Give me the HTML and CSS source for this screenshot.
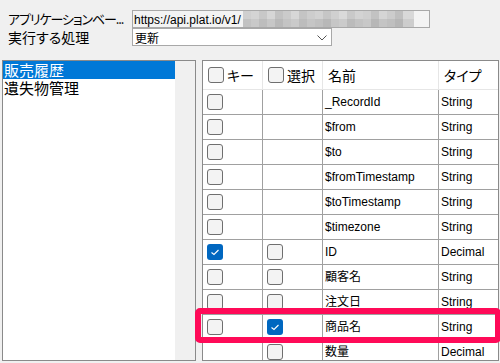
FILE: index.html
```html
<!DOCTYPE html>
<html lang="ja">
<head>
<meta charset="utf-8">
<link rel="stylesheet" href="styles.css">
</head>
<body>
<div class="form">
  <div class="label app">アプリケーションベー...</div>
  <div class="textbox"><span class="url">https://api.plat.io/v1/</span><span class="mosaic"></span></div>
  <div class="label">実行する処理</div>
  <div class="select"><span class="sel-text">更新</span><svg class="chev" width="10" height="6" viewBox="0 0 10 6"><polyline points="0.5,0.5 5,5 9.5,0.5" fill="none" stroke="#555" stroke-width="1"/></svg></div>
</div>
<div class="main">
  <div class="list">
    <div class="list-inner">
      <div class="item selected">販売履歴</div>
      <div class="item">遺失物管理</div>
    </div>
  </div>
  <div class="grid">
    <div class="table">
      <div class="hcell"><span class="cb"></span><span class="htext">キー</span></div>
      <div class="hcell"><span class="cb"></span><span class="htext">選択</span></div>
      <div class="hcell"><span class="htext">名前</span></div>
      <div class="hcell last"><span class="htext">タイプ</span></div>

      <div class="cell"><span class="cb"></span></div><div class="cell"></div><div class="cell txt">_RecordId</div><div class="cell txt last">String</div>
      <div class="cell"><span class="cb"></span></div><div class="cell"></div><div class="cell txt">$from</div><div class="cell txt last">String</div>
      <div class="cell"><span class="cb"></span></div><div class="cell"></div><div class="cell txt">$to</div><div class="cell txt last">String</div>
      <div class="cell"><span class="cb"></span></div><div class="cell"></div><div class="cell txt">$fromTimestamp</div><div class="cell txt last">String</div>
      <div class="cell"><span class="cb"></span></div><div class="cell"></div><div class="cell txt">$toTimestamp</div><div class="cell txt last">String</div>
      <div class="cell"><span class="cb"></span></div><div class="cell"></div><div class="cell txt">$timezone</div><div class="cell txt last">String</div>
      <div class="cell"><span class="cb checked"><svg width="16" height="16" viewBox="0 0 16 16"><polyline points="4.5,8.5 7,10.5 11.5,6" fill="none" stroke="#fff" stroke-width="1.1"/></svg></span></div><div class="cell"><span class="cb"></span></div><div class="cell txt">ID</div><div class="cell txt last">Decimal</div>
      <div class="cell"><span class="cb"></span></div><div class="cell"><span class="cb"></span></div><div class="cell txt">顧客名</div><div class="cell txt last">String</div>
      <div class="cell"><span class="cb"></span></div><div class="cell"><span class="cb"></span></div><div class="cell txt">注文日</div><div class="cell txt last">String</div>
      <div class="cell"><span class="cb"></span></div><div class="cell"><span class="cb checked"><svg width="16" height="16" viewBox="0 0 16 16"><polyline points="4.5,8.5 7,10.5 11.5,6" fill="none" stroke="#fff" stroke-width="1.1"/></svg></span></div><div class="cell txt">商品名</div><div class="cell txt last">String</div>
      <div class="cell"></div><div class="cell"><span class="cb"></span></div><div class="cell txt">数量</div><div class="cell txt last">Decimal</div>
    </div>
  </div>
</div>
<div class="highlight"></div>
</body>
</html>
```

FILE: styles.css
```css
html, body {
  margin: 0;
  padding: 0;
}
body {
  background: #f0f0f0;
  width: 500px;
  height: 363px;
  overflow: hidden;
  position: relative;
  font-family: "Liberation Sans", "Noto Sans CJK JP", sans-serif;
  font-size: 12px;
  color: #000;
}
.form {
  display: grid;
  grid-template-columns: 124px auto;
  justify-items: start;
  padding: 10px 0 0 8px;
}
.label {
  font-family: "Noto Sans CJK JP", sans-serif;
  font-size: 14px;
  font-feature-settings: "palt";
  line-height: 18px;
  height: 18px;
  white-space: nowrap;
}
.label.app {
  font-size: 13px;
  letter-spacing: -1.1px;
}
.textbox {
  box-sizing: border-box;
  width: 298px;
  height: 18px;
  border: 1px solid #a8a8a8;
  background: #f3f3f3;
  display: flex;
  align-items: stretch;
  padding-left: 1px;
}
.url {
  line-height: 17px;
  padding-top: 1px;
  color: #000;
}
.mosaic {
  width: 171px;
  margin-left: 2px;
  background:
    linear-gradient(to right,
      #cfcfcf 0 8px, #d4d4d4 8px 16px, #c8c8c8 16px 24px, #d6d6d6 24px 32px,
      #c2c2c2 32px 40px, #cbcbcb 40px 48px, #d7d7d7 48px 56px, #c4c4c4 56px 64px,
      #cdcdcd 64px 72px, #d2d2d2 72px 80px, #c6c6c6 80px 88px, #d0d0d0 88px 96px,
      #dadada 96px 104px, #c9c9c9 104px 112px, #d3d3d3 112px 120px, #cfcfcf 120px 128px,
      #c2c2c2 128px 136px, #d5d5d5 136px 144px, #cccccc 144px 152px, #bfbfbf 152px 160px,
      #d8d8d8 160px 171px) top / 100% 50% no-repeat,
    linear-gradient(to right,
      #c2c2c2 0 8px, #c9c9c9 8px 16px, #bdbdbd 16px 24px, #c7c7c7 24px 32px,
      #b9b9b9 32px 40px, #c4c4c4 40px 48px, #cacaca 48px 56px, #bcbcbc 56px 64px,
      #c5c5c5 64px 72px, #c0c0c0 72px 80px, #b8b8b8 80px 88px, #c6c6c6 88px 96px,
      #cbcbcb 96px 104px, #bbbbbb 104px 112px, #c3c3c3 112px 120px, #c8c8c8 120px 128px,
      #b7b7b7 128px 136px, #c4c4c4 136px 144px, #bfbfbf 144px 152px, #b6b6b6 152px 160px,
      #cdcdcd 160px 171px) bottom / 100% 50% no-repeat;
}
.select {
  box-sizing: border-box;
  width: 200px;
  height: 18px;
  border: 1px solid #a8a8a8;
  background: #fff;
  display: flex;
  align-items: center;
  justify-content: space-between;
  padding: 0 4px 0 2px;
}
.sel-text {
  font-family: "Noto Sans CJK JP", sans-serif;
  font-size: 12px;
  line-height: 16px;
  padding-top: 2px;
}
.chev {
  display: block;
  margin-top: 2px;
}
.main {
  display: flex;
  gap: 6px;
  margin: 14px 0 0 2px;
  height: 301px;
}
.list {
  box-sizing: border-box;
  width: 194px;
  height: 301px;
  border: 1px solid #8a8a8a;
  background: #f0f0f0;
}
.list-inner {
  width: 172px;
  height: 100%;
  background: #fff;
}
.item {
  font-family: "Noto Sans CJK JP", sans-serif;
  font-size: 15px;
  line-height: 18px;
  height: 18px;
  padding-left: 1px;
  white-space: nowrap;
}
.item.selected {
  background: #0078d7;
  color: #fff;
}
.grid {
  box-sizing: border-box;
  width: 297px;
  height: 301px;
  border: 1px solid #8a8a8a;
  background: #fff;
  overflow: hidden;
}
.table {
  display: grid;
  grid-template-columns: 60px 60px 116px 59px;
  grid-auto-rows: 25px;
  grid-template-rows: 29px;
}
.hcell {
  box-sizing: border-box;
  border-right: 1px solid #e6e6e6;
  border-bottom: 1px solid #e6e6e6;
  display: flex;
  align-items: center;
  padding-left: 5px;
  background: #fff;
}
.hcell .htext {
  font-family: "Noto Sans CJK JP", sans-serif;
  font-size: 14px;
  font-feature-settings: "palt";
  line-height: 18px;
  white-space: nowrap;
}
.hcell .cb + .htext {
  margin-left: 3px;
}
.cell {
  box-sizing: border-box;
  border-right: 1px solid #a0a0a0;
  border-bottom: 1px solid #a0a0a0;
  display: flex;
  align-items: center;
  padding-left: 4px;
  overflow: hidden;
}
.cell.txt {
  padding-left: 2px;
  line-height: 24px;
  white-space: nowrap;
}
.hcell.last, .cell.last {
  border-right: none;
}
.cb {
  box-sizing: border-box;
  display: block;
  width: 16px;
  height: 16px;
  border: 1px solid #6f6f6f;
  border-radius: 3px;
  background: #f3f3f3;
  flex: none;
}
.cb.checked {
  border: none;
  background: #0067c0;
}
.cb svg {
  display: block;
}
.highlight {
  position: absolute;
  left: 195px;
  top: 308px;
  width: 306px;
  height: 35px;
  box-sizing: border-box;
  border: 6px solid #ff0a58;
  border-radius: 5px;
}
```
